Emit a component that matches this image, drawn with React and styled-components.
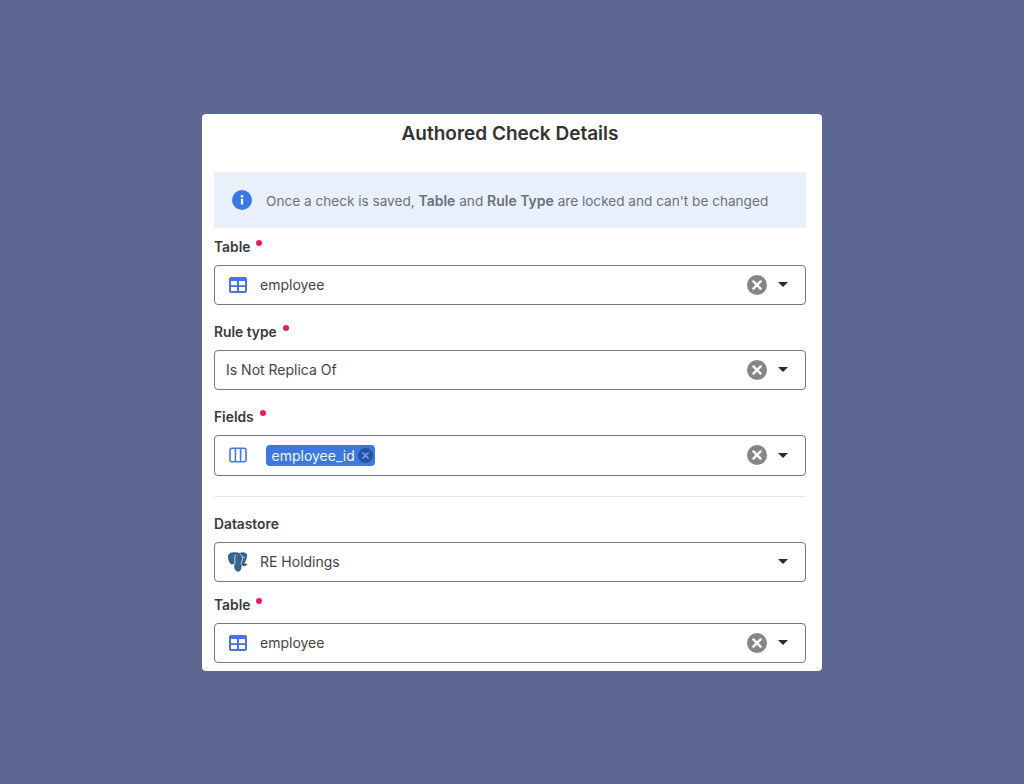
import styled, { createGlobalStyle } from 'styled-components';

const GlobalStyle = createGlobalStyle`
  html, body {
    margin: 0;
    padding: 0;
    background: #5c6891;
  }
  * { box-sizing: border-box; }
`

const Page = styled.div`
  width: 1024px;
  height: 784px;
  display: flex;
  align-items: center;
  justify-content: center;
  background: #5c6891;
  font-family: Inter, "Liberation Sans", sans-serif;
`
const Modal = styled.div`
  width: 620px;
  height: 557px;
  background: #fff;
  border-radius: 4px;
  padding: 0 16px 0 12px;
  overflow: hidden;
`
const Title = styled.h2`
  margin: 0 0 26px;
  height: 32px;
  padding-top: 4px;
  line-height: 32px;
  font-size: 19px;
  font-weight: 600;
  text-align: center;
  color: #333;
`
const Banner = styled.div`
  height: 56px;
  display: flex;
  align-items: center;
  gap: 14px;
  padding: 0 18px;
  background: #e9f0fb;
  border-radius: 2px;
  font-size: 13.6px;
  color: #68707f;
  b { font-weight: 600; font-size: 14px; }
`
const BannerText = styled.span`
  padding-top: 2px;
`
const Field = styled.div`
  margin-top: ${(p) => p.$top}px;
`
const Label = styled.label`
  display: block;
  height: 20px;
  margin-bottom: 8px;
  line-height: 20px;
  font-size: 13.8px;
  font-weight: 600;
  color: #3a3a3a;
`
const Dot = styled.span`
  display: inline-block;
  width: 6px;
  height: 6px;
  margin-left: 6px;
  border-radius: 50%;
  background: #f0185f;
  vertical-align: 6px;
`
const Select = styled.div`
  height: ${(p) => p.$h || 40}px;
  display: flex;
  align-items: center;
  padding: 0 17.500px 0 ${(p) => (p.$plain ? 11 : 13)}px;
  border: 1px solid #777;
  border-radius: 4px;
  font-size: 14px;
  color: #444;
`
const IconSlot = styled.span`
  display: flex;
  width: 20px;
  margin-right: ${(p) => p.$gap || 12}px;
  justify-content: center;
`
const Value = styled.span`
  flex: 1;
`
const Chip = styled.span`
  display: inline-flex;
  align-items: center;
  height: 21px;
  padding: 0 2px 0 5.500px;
  border-radius: 4px;
  background: #3c78e0;
  color: #f2f6ff;
  font-size: 14px;
`
const ChipClose = styled.span`
  display: flex;
  width: 15px;
  height: 15px;
  margin-left: 3px;
`
const Clear = styled.span`
  display: flex;
  margin-right: 10.500px;
`
const Caret = styled.span`
  width: 0;
  height: 0;
  border-left: 5.500px solid transparent;
  border-right: 5.500px solid transparent;
  border-top: 5.500px solid #2b2b2b;
`
const Divider = styled.hr`
  margin: 20px 0 17px;
  border: 0;
  border-top: 1px solid #e6e6e6;
`

const InfoIcon = () => (
  <svg width="20" height="20" viewBox="0 0 20 20">
    <circle cx="10" cy="10" r="10" fill="#3a78e3" />
    <rect x="8.900" y="8.600" width="2.200" height="6" rx="0.400" fill="#fff" />
    <circle cx="10" cy="6.200" r="1.300" fill="#fff" />
  </svg>
)

const TableIcon = () => (
  <svg width="18" height="16" viewBox="0 0 18 16">
    <rect width="18" height="16" rx="2" fill="#4a74d9" />
    <rect x="2" y="4" width="6" height="4.200" fill="#fff" />
    <rect x="10" y="4" width="6" height="4.200" fill="#fff" />
    <rect x="2" y="10" width="6" height="4" fill="#fff" />
    <rect x="10" y="10" width="6" height="4" fill="#fff" />
  </svg>
)

const ColumnsIcon = () => (
  <svg width="18" height="16" viewBox="0 0 18 16" fill="none" stroke="#3f7be2" strokeWidth="1.600">
    <rect x="1" y="1.250" width="16" height="13.500" rx="2" />
    <path d="M6.400 1.250v13.500M11.600 1.250v13.500" />
  </svg>
)

const ClearIcon = () => (
  <svg width="20" height="20" viewBox="0 0 20 20">
    <circle cx="10" cy="10" r="10" fill="#868686" />
    <path d="M6.400 6.400l7.200 7.200M13.600 6.400l-7.200 7.200" stroke="#fff" strokeWidth="2.400" strokeLinecap="round" />
  </svg>
)

const ChipCloseIcon = () => (
  <svg width="15" height="15" viewBox="0 0 15 15">
    <circle cx="7.500" cy="7.500" r="7.500" fill="#23529f" />
    <path d="M4.900 4.900l5.200 5.200M10.100 4.900l-5.200 5.200" stroke="#6f9be6" strokeWidth="1.700" strokeLinecap="round" />
  </svg>
)

const PostgresIcon = () => (
  <svg width="21" height="20" viewBox="0 0 21 20">
    <path
      d="M4.500.500C1.800.500.200 2.500.500 5c.300 2.600 1.300 5.600 2.600 6.800.900.800 1.900.400 2.600-.500.400.300.800.500 1.300.600-.100 1.500 0 3.100.300 4.500.400 2.200 1.500 3.300 3.300 3.200 1.900-.100 2.700-1.400 2.900-3.400.100-1 .100-1.900.300-2.600 1.700.500 4.100.300 5.700-.700.500-.400.100-.900-.600-.800-1 .100-1.900 0-2.500-.300 1.300-2.200 2.800-4.900 2.900-7.200C20.700 2.200 18 .200 15 .400c-1 .100-1.900.300-2.600.700C10 .300 7 .200 4.500.500z"
      fill="#336791"
      stroke="#1d3a57"
      strokeWidth="0.800"
    />
    <path
      d="M8 2.500c-1 2-1.200 4.500-.800 6.700.200 1.200.100 2.400-.100 3.500M13 1.800c2 1.500 2.800 3.800 2.200 6-.300 1.300-1.300 2.200-1.300 3.600 0 1 .200 1.700.900 2.400"
      fill="none"
      stroke="#e3ebf2"
      strokeWidth="0.900"
      strokeLinecap="round"
    />
    <circle cx="16.800" cy="5" r="0.700" fill="#e3ebf2" />
  </svg>
)

const SelectEnd = ({ clearable = true }) => (
  <>
    {clearable && (
      <Clear>
        <ClearIcon />
      </Clear>
    )}
    <Caret />
  </>
)

const RequiredLabel = ({ children }) => (
  <Label>
    {children}
    <Dot />
  </Label>
)

function App() {
  return (
    <>
      <GlobalStyle />
      <Page>
        <Modal>
          <Title>Authored Check Details</Title>
          <Banner>
            <InfoIcon />
            <BannerText>
              Once a check is saved, <b>Table</b> and <b>Rule Type</b> are locked and can't be changed
            </BannerText>
          </Banner>

          <Field $top={9}>
            <RequiredLabel>Table</RequiredLabel>
            <Select>
              <IconSlot>
                <TableIcon />
              </IconSlot>
              <Value>employee</Value>
              <SelectEnd />
            </Select>
          </Field>

          <Field $top={17}>
            <RequiredLabel>Rule type</RequiredLabel>
            <Select $plain>
              <Value>Is Not Replica Of</Value>
              <SelectEnd />
            </Select>
          </Field>

          <Field $top={17}>
            <RequiredLabel>Fields</RequiredLabel>
            <Select $h={41}>
              <IconSlot $gap={18}>
                <ColumnsIcon />
              </IconSlot>
              <Value>
                <Chip>
                  employee_id
                  <ChipClose>
                    <ChipCloseIcon />
                  </ChipClose>
                </Chip>
              </Value>
              <SelectEnd />
            </Select>
          </Field>

          <Divider />

          <Field>
            <Label>Datastore</Label>
            <Select>
              <IconSlot>
                <PostgresIcon />
              </IconSlot>
              <Value>RE Holdings</Value>
              <SelectEnd clearable={false} />
            </Select>
          </Field>

          <Field $top={13}>
            <RequiredLabel>Table</RequiredLabel>
            <Select>
              <IconSlot>
                <TableIcon />
              </IconSlot>
              <Value>employee</Value>
              <SelectEnd />
            </Select>
          </Field>
        </Modal>
      </Page>
    </>
  )
}

export default App
